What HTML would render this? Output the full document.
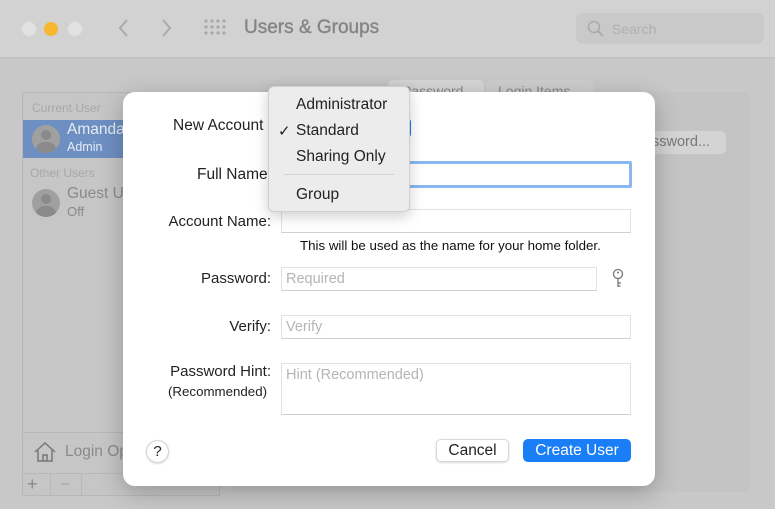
<!DOCTYPE html><html><head><style>
*{margin:0;padding:0;box-sizing:border-box}
body{width:775px;height:509px;overflow:hidden;position:relative;font-family:"Liberation Sans",sans-serif;background:#c4c4c4}
.a{position:absolute}
.lbl{position:absolute;font-size:15px;color:#222;text-align:right;right:504px;white-space:nowrap}
.fld{position:absolute;background:#fff;border:1px solid #e2e2e2;border-bottom-color:#d0d0d0;font-size:14.5px;color:#b5b5b5;padding:3px 4px}
.av{position:absolute;width:28px;height:28px;border-radius:50%;background:#a0a0a0;overflow:hidden}
.av:before{content:"";position:absolute;left:9px;top:5px;width:10px;height:10px;border-radius:50%;background:#8a8a8a}
.av:after{content:"";position:absolute;left:4px;top:17px;width:20px;height:14px;border-radius:50%;background:#8a8a8a}
</style></head><body>
<div class="a" style="left:0;top:0;width:775px;height:58px;background:#d2d2d2;border-bottom:1px solid #c2c2c2"></div>
<div class="a" style="left:0;top:59px;width:775px;height:450px;background:#c8c8c8"></div>
<div class="a" style="left:22px;top:22px;width:14px;height:14px;border-radius:50%;background:#e2e2e2"></div>
<div class="a" style="left:44px;top:22px;width:14px;height:14px;border-radius:50%;background:#f7b731"></div>
<div class="a" style="left:68px;top:22px;width:14px;height:14px;border-radius:50%;background:#e2e2e2"></div>
<svg class="a" style="left:115px;top:17px" width="65" height="22"><path d="M12 3 L5 11 L12 19" stroke="#aaa" stroke-width="2" fill="none"/><path d="M48 3 L55 11 L48 19" stroke="#aaa" stroke-width="2" fill="none"/></svg>
<svg class="a" style="left:204px;top:19px" width="22" height="18" fill="#a8a8a8"><g id="r"><circle cx="2" cy="2" r="1.6"/><circle cx="8" cy="2" r="1.6"/><circle cx="14" cy="2" r="1.6"/><circle cx="20" cy="2" r="1.6"/></g><use href="#r" y="6"/><use href="#r" y="12"/></svg>
<div class="a" style="left:244px;top:17px;font-size:19px;color:#858585;-webkit-text-stroke:0.4px #858585">Users &amp; Groups</div>
<div class="a" style="left:576px;top:13px;width:188px;height:31px;border-radius:7px;background:#c9c9c9"></div>
<svg class="a" style="left:587px;top:20px" width="18" height="18"><circle cx="7" cy="7" r="5.5" stroke="#aaa" stroke-width="1.5" fill="none"/><path d="M11 11 L16 16" stroke="#aaa" stroke-width="1.6"/></svg>
<div class="a" style="left:612px;top:21px;font-size:14px;color:#b0b0b0">Search</div>
<div class="a" style="left:388px;top:80px;width:96px;height:22px;border-radius:5px;background:#d6d6d6;font-size:14px;color:#888;padding:3px 14px">Password</div>
<div class="a" style="left:486px;top:80px;width:108px;height:22px;border-radius:5px;background:#cdcdcd;font-size:14px;color:#888;padding:3px 12px">Login Items</div>
<div class="a" style="left:230px;top:92px;width:520px;height:400px;background:#c4c4c4;border-radius:4px"></div>
<div class="a" style="left:640px;top:131px;width:86px;height:23px;border-radius:5px;background:#d4d4d4;font-size:14.5px;color:#777;padding:3px 0 0 12px">ssword...</div>
<div class="a" style="left:22px;top:92px;width:198px;height:404px;background:#c6c6c6;border:1px solid #b8b8b8"></div>
<div class="a" style="left:32px;top:101px;font-size:12px;color:#a8a8a8">Current User</div>
<div class="a" style="left:23px;top:120px;width:197px;height:38px;background:#6e8fc2"></div>
<div class="av" style="left:32px;top:125px"></div>
<div class="a" style="left:67px;top:121px;font-size:15.5px;color:#e6ecf4">Amanda</div>
<div class="a" style="left:67px;top:140px;font-size:12.5px;color:#e6ecf4">Admin</div>
<div class="a" style="left:30px;top:166px;font-size:12px;color:#a8a8a8">Other Users</div>
<div class="av" style="left:32px;top:189px"></div>
<div class="a" style="left:67px;top:185px;font-size:15.5px;color:#8a8a8a">Guest User</div>
<div class="a" style="left:67px;top:204px;font-size:13px;color:#8a8a8a">Off</div>
<div class="a" style="left:23px;top:432px;width:197px;height:1px;background:#b8b8b8"></div>
<svg class="a" style="left:33px;top:441px" width="24" height="22"><path d="M2 11 L12 2 L22 11 M5 9 V20 H19 V9 M10 20 V14 H14 V20" stroke="#777" stroke-width="1.5" fill="none"/></svg>
<div class="a" style="left:65px;top:443px;font-size:15.5px;color:#8a8a8a">Login Options</div>
<div class="a" style="left:23px;top:473px;width:197px;height:1px;background:#b8b8b8"></div>
<div class="a" style="left:27px;top:474px;font-size:18px;color:#888">+</div>
<div class="a" style="left:50px;top:474px;width:1px;height:21px;background:#b8b8b8"></div>
<div class="a" style="left:60px;top:474px;font-size:18px;color:#aaa">−</div>
<div class="a" style="left:81px;top:474px;width:1px;height:21px;background:#b8b8b8"></div>
<div class="a" style="left:123px;top:92px;width:532px;height:394px;background:#fff;border-radius:12px;box-shadow:0 6px 24px rgba(0,0,0,.25)"></div>
<div class="a" style="left:173px;top:117px;font-size:15.5px;color:#222">New Account</div>
<div class="a" style="left:400px;top:118px;width:11px;height:20px;border-radius:4px;background:#1a7cf5"></div>
<div class="a" style="left:197px;top:166px;font-size:15.5px;color:#222">Full Name</div>
<div class="a" style="left:280px;top:161px;width:352px;height:27px;border:3px solid #8ab7f0;border-radius:2px;background:#fff"></div>
<div class="lbl" style="top:213px">Account Name:</div>
<div class="fld" style="left:281px;top:209px;width:350px;height:24px"></div>
<div class="a" style="left:300px;top:238px;font-size:13.3px;color:#111">This will be used as the name for your home folder.</div>
<div class="lbl" style="top:270px">Password:</div>
<div class="fld" style="left:281px;top:267px;width:316px;height:24px">Required</div>
<svg class="a" style="left:611px;top:268px" width="14" height="22"><circle cx="7" cy="6" r="4.5" stroke="#777" stroke-width="1.3" fill="none"/><circle cx="7" cy="4.5" r="1" fill="#777"/><path d="M7 10.5 V19 M7 15 H10 M7 18 H9.5" stroke="#777" stroke-width="1.3" fill="none"/></svg>
<div class="lbl" style="top:318px">Verify:</div>
<div class="fld" style="left:281px;top:315px;width:350px;height:24px">Verify</div>
<div class="lbl" style="top:363px">Password Hint:</div>
<div class="a" style="left:168px;top:384px;font-size:13.3px;color:#222">(Recommended)</div>
<div class="fld" style="left:281px;top:363px;width:350px;height:52px">Hint (Recommended)</div>
<div class="a" style="left:146px;top:440px;width:23px;height:23px;border-radius:50%;background:#fff;border:1px solid #d4d4d4;box-shadow:0 1px 2px rgba(0,0,0,.15);font-size:15px;text-align:center;line-height:21px;color:#222">?</div>
<div class="a" style="left:436px;top:439px;width:73px;height:23px;border-radius:5px;background:#fff;border:1px solid #d8d8d8;box-shadow:0 1px 2px rgba(0,0,0,.15);font-size:15.5px;text-align:center;line-height:21px;color:#222">Cancel</div>
<div class="a" style="left:523px;top:439px;width:108px;height:23px;border-radius:5px;background:#1a7ef6;font-size:15.5px;text-align:center;line-height:23px;color:#fff">Create User</div>
<div class="a" style="left:268px;top:86px;width:142px;height:126px;border-radius:6px;background:#ececec;border:1px solid #cfcfcf;box-shadow:0 4px 14px rgba(0,0,0,.2)"></div>
<div class="a" style="left:296px;top:96px;font-size:15.5px;color:#222">Administrator</div>
<div class="a" style="left:278px;top:122px;font-size:15px;color:#222">✓</div>
<div class="a" style="left:296px;top:122px;font-size:15.5px;color:#222">Standard</div>
<div class="a" style="left:296px;top:148px;font-size:15.5px;color:#222">Sharing Only</div>
<div class="a" style="left:284px;top:174px;width:110px;height:1px;background:#d2d2d2"></div>
<div class="a" style="left:296px;top:186px;font-size:15.5px;color:#222">Group</div>
</body></html>
